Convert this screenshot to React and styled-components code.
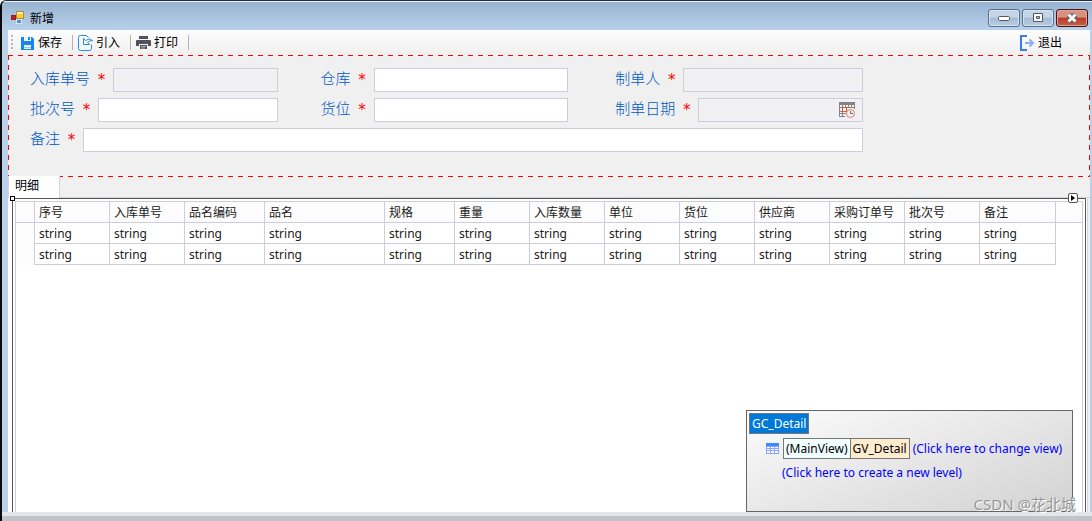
import React from 'react';
import styled, { createGlobalStyle } from 'styled-components';

const GlobalStyle = createGlobalStyle`
    * {
        box-sizing: border-box;
    }
    body {
        margin: 0;
        font-family: "Noto Sans", "Noto Sans CJK SC", sans-serif;
        font-size: 12px;
        color: #000;
    }
    button, input {
        font-family: inherit;
        font-size: inherit;
        color: inherit;
    }
`;

//Styled Components
const Window = styled.div`
    height: 100vh;
    display: flex;
    flex-direction: column;
    overflow: hidden;
    background-color: #b9d1ea;
    border-left: 2px solid #0a0a0a;
    border-top: 1px solid #26303a;
    border-top-left-radius: 6px;
`;

const TitleBar = styled.header`
    height: 29px;
    flex: none;
    display: flex;
    align-items: center;
    gap: 5px;
    padding: 4px 4px 0 9px;
    background: linear-gradient(#98b4d2, #b9d1ea);
    border-top: 1px solid #eaf1f8;
`;

const Title = styled.h1`
    flex: 1;
    margin: 0;
    font-size: 12px;
    font-weight: normal;
`;

const WindowButtons = styled.div`
    display: flex;
    gap: 2px;
`;

const WindowButton = styled.button`
    width: 32px;
    height: 18px;
    display: flex;
    justify-content: center;
    align-items: center;
    padding: 0;
    border: 1px solid ${props => (props.$close ? '#4b1014' : '#5b6f8c')};
    border-radius: 3px;
    box-shadow: inset 0 0 0 1px ${props => (props.$close ? '#dba49c' : '#d5e2f0')};
    background: ${props => (props.$close
        ? 'linear-gradient(#d89080 45%, #b83a26 50%, #c8604a)'
        : 'linear-gradient(#c4d5e8 45%, #a4bbd5 50%, #b7cde4)')};
`;

const Frame = styled.main`
    flex: 1;
    min-height: 0;
    display: flex;
    flex-direction: column;
    margin: 0 2px 0 6px;
    background-color: #f0f0f0;
`;

const ToolBar = styled.nav`
    height: 25px;
    flex: none;
    display: flex;
    align-items: center;
    padding: 0 28px 0 3px;
    background: linear-gradient(#fdfdfd, #f0f0f0);
`;

const Grip = styled.span`
    width: 2px;
    height: 15px;
    margin-right: 8px;
    background: repeating-linear-gradient(#b8b8b8 0 2px, transparent 2px 4px);
`;

const ToolButton = styled.button`
    display: flex;
    align-items: center;
    gap: 3px;
    padding: 0;
    border: none;
    background: none;
    line-height: 16px;
`;

const Divider = styled.span`
    width: 1px;
    height: 15px;
    margin: 0 5px 0 10px;
    background-color: #b4b4b4;
`;

const Spacer = styled.span`
    flex: 1;
`;

const dash = 'red 0 5px, transparent 5px 10px';

const FormPanel = styled.form`
    flex: none;
    display: grid;
    grid-template-columns: 1fr 43px 1fr 47px 1fr;
    row-gap: 6px;
    padding: 13px 21% 25px 22px;
    background:
        repeating-linear-gradient(90deg, ${dash}) 0 0 / 100% 1px no-repeat,
        repeating-linear-gradient(90deg, ${dash}) 0 100% / 100% 1px no-repeat,
        repeating-linear-gradient(${dash}) 0 0 / 1px 100% no-repeat,
        repeating-linear-gradient(${dash}) 100% 0 / 1px 100% no-repeat,
        #f0f0f0;
`;

const Field = styled.div`
    grid-column: ${props => props.$column};
    height: 24px;
    display: flex;
    align-items: center;
`;

const FieldLabel = styled.label`
    flex: none;
    display: flex;
    padding-bottom: 2px;
    font-family: "Noto Sans CJK SC", sans-serif;
    font-size: 15px;
    font-weight: 300;
    line-height: 22px;
    color: #0058c4;
`;

const Required = styled.span`
    width: 23px;
    padding-top: 2px;
    text-align: center;
    font-family: "DejaVu Sans Mono", monospace;
    font-size: 15px;
    font-weight: normal;
    color: red;
`;

const InputBox = styled.span`
    flex: 1;
    min-width: 0;
    height: 24px;
    display: flex;
    align-items: center;
    padding-right: ${props => (props.$icon ? '6px' : '0')};
    border: 1px solid #cdcdde;
    background-color: ${props => (props.$locked ? '#f1f1f4' : '#fff')};
`;

const TextInput = styled.input`
    flex: 1;
    min-width: 0;
    height: 100%;
    padding: 0 4px;
    border: none;
    outline: none;
    background: transparent;
`;

const IconButton = styled.button`
    display: flex;
    padding: 0;
    border: none;
    background: none;
`;

const TabStrip = styled.div`
    height: 21px;
    flex: none;
    display: flex;
    border-bottom: 1px solid #d4d4dc;
`;

const Tab = styled.button`
    width: 52px;
    height: 22px;
    margin-top: -1px;
    padding: 0 0 2px 6px;
    border: 1px solid #d4d4dc;
    border-width: 0 1px;
    background-color: #fff;
    text-align: left;
    line-height: 16px;
`;

const TabPage = styled.section`
    flex: 1;
    min-height: 0;
    display: flex;
    margin-right: 2px;
    padding: 0 1px 0 4px;
    border-right: 1px solid #d4d4dc;
    background-color: #fff;
`;

const Selection = styled.div`
    position: relative;
    flex: 1;
    min-width: 0;
    display: flex;
    padding: 2px 2px 0 2px;
    border: 1px solid #555;
    border-bottom: none;
`;

const SizeHandle = styled.span`
    position: absolute;
    left: -3px;
    top: -3px;
    width: 5px;
    height: 5px;
    border: 1px solid #000;
    background-color: #fff;
`;

const SmartTag = styled.button`
    position: absolute;
    right: 7px;
    top: -6px;
    width: 10px;
    height: 10px;
    display: flex;
    justify-content: center;
    align-items: center;
    padding: 0;
    border: 1px solid #555;
    border-radius: 2px;
    background-color: #fff;
`;

const GridArea = styled.div`
    position: relative;
    flex: 1;
    min-width: 0;
    border: 1px solid #cdcdde;
    border-bottom: none;
`;

const Table = styled.table`
    width: 100%;
    table-layout: fixed;
    border-collapse: separate;
    border-spacing: 0;
    line-height: 16px;
    color: #202020;
`;

const Column = styled.col`
    width: ${props => (props.$width ? `${props.$width}px` : 'auto')};
`;

const HeadCell = styled.th`
    height: 21px;
    padding: 1px 0 0 4px;
    border-right: 1px solid #cdcdde;
    border-bottom: 1px solid #cdcdde;
    background-color: #fcfcfc;
    font-weight: normal;
    text-align: left;
    white-space: nowrap;
    &:last-child {
        border-right: none;
    }
`;

const Cell = styled.td`
    height: 21px;
    padding: 2px 0 0 4px;
    border-right: 1px solid #cdcdde;
    border-bottom: 1px solid #cdcdde;
`;

const Indicator = styled.td`
    border-right: 1px solid #cdcdde;
    background-color: #fcfcfc;
`;

const LevelPanel = styled.aside`
    position: absolute;
    right: 9px;
    bottom: 0;
    width: 327px;
    height: 102px;
    display: flex;
    flex-direction: column;
    align-items: flex-start;
    gap: 4px;
    padding: 2px;
    border: 1px solid #666;
    background: linear-gradient(160deg, #fcfcfc, #d2d2d2);
    line-height: 19px;
    white-space: nowrap;
`;

const LevelRow = styled.div`
    display: flex;
    align-items: center;
    padding-left: ${props => props.$indent}px;
`;

const ViewTags = styled.span`
    display: flex;
    margin-left: ${props => (props.$nested ? '4px' : '0')};
`;

const ViewTag = styled.span`
    padding: 0 2px;
    border: 1px solid #777;
    background-color: ${props => props.$fill};
    color: ${props => props.$color || '#000'};
    & + & {
        border-left: none;
    }
`;

const LevelLink = styled.a`
    margin-left: 3px;
    color: #0000ff;
    text-decoration: none;
`;

const Watermark = styled.span`
    position: absolute;
    right: -4px;
    bottom: -3px;
    font-size: 15px;
    line-height: 20px;
    color: #969696;
    text-shadow: 1px 1px 0 #fff;
    white-space: nowrap;
`;

const StatusBar = styled.footer`
    height: 9px;
    flex: none;
    border-top: 4px solid #e5e5ea;
    background-color: #c2c2c9;
`;
//end Styled Components

const FormIcon = () => (
    <svg width="14" height="14" viewBox="0 0 14 14">
        <rect x="5.5" y="0.5" width="7" height="7" fill="#ffcc33" stroke="#b08a3a" />
        <path d="M6 1H12V3H6Z" fill="#fff0a8" />
        <rect x="0.5" y="4.5" width="4" height="4" fill="#c8201c" stroke="#8a2424" />
        <rect x="5.5" y="8.5" width="5" height="4" fill="#4d8df0" stroke="#dce8f8" />
    </svg>
);

const SaveIcon = () => (
    <svg width="14" height="14" viewBox="0 0 14 14">
        <path d="M0 1H11L13 3V14H0Z" fill="#1686ee" />
        <path d="M3 1H10V5H3Z" fill="#f4f6f8" />
        <path d="M7 1H9V4H7Z" fill="#1686ee" />
        <path d="M3 9H10V13H3Z" fill="#e6eef6" />
        <path d="M3 11H10V12H3Z" fill="#9cc8f2" />
    </svg>
);

const ImportIcon = () => (
    <svg width="15" height="16" viewBox="0 0 15 16" fill="none" stroke="#2a8be8">
        <path d="M10.5 2.5L8.5 0.5H2.5Q0.5 0.5 0.5 2.5V13.5Q0.5 15.5 2.5 15.5H11.5Q13.5 15.5 13.5 13.5V9.5" />
        <path d="M5.5 3.5V9.5H11.5L9.500 7.500Q11.500 5.500 14.500 5.500Q11.500 2.500 7.500 5.500Z" />
    </svg>
);

const PrintIcon = () => (
    <svg width="15" height="14" viewBox="0 0 15 14" fill="#51515b">
        <path d="M3 0H12V3H3ZM1 4H14Q15 4 15 5V10H12V8H3V10H0V5Q0 4 1 4ZM4 9H11V13H4Z" />
        <path d="M5 10.500H10M5 12H9" stroke="#aaa" />
    </svg>
);

const ExitIcon = () => (
    <svg width="15" height="16" viewBox="0 0 15 16" fill="none">
        <path d="M7 1H1V15H7" stroke="#3c78f0" strokeWidth="2" />
        <path d="M5 8H13M9.500 4.500L13 8L9.500 11.500" stroke="#8cacf6" strokeWidth="2" />
    </svg>
);

const CalendarIcon = () => (
    <svg width="17" height="17" viewBox="0 0 17 17" fill="none">
        <path d="M0 0H16V3H0Z" fill="#858585" />
        <path d="M0.500 3V15M3.500 3V5M6.500 3V5M9.500 3V6M12.500 3V6M15.500 3V7M0 5.500H16M0 9.500H3M0 11.500H7M0 14.500H6M3.500 10V15" stroke="#858585" />
        <rect x="3.500" y="5.500" width="4" height="4" fill="#fff" stroke="#d5583c" />
        <circle cx="11.500" cy="11.500" r="4" fill="#f4f1f1" stroke="#da846f" />
        <path d="M11.500 9V11.500H14" stroke="#666" />
    </svg>
);

const ViewIcon = () => (
    <svg width="13" height="11" viewBox="0 0 13 11">
        <path d="M0 0H13V11H0Z" fill="#8da5f8" />
        <path d="M0 0H13V3H0Z" fill="#3b8bff" />
        <path d="M1 4H4V5H1ZM5 4H8V5H5ZM9 4H12V5H9ZM1 6H4V7H1ZM5 6H8V7H5ZM9 6H12V7H9ZM1 8H4V10H1ZM5 8H8V10H5ZM9 8H12V10H9Z" fill="#fff" />
    </svg>
);

const columns = [
    { name: '序号', width: 75 },
    { name: '入库单号', width: 75 },
    { name: '品名编码', width: 80 },
    { name: '品名', width: 120 },
    { name: '规格', width: 70 },
    { name: '重量', width: 75 },
    { name: '入库数量', width: 75 },
    { name: '单位', width: 75 },
    { name: '货位', width: 75 },
    { name: '供应商', width: 75 },
    { name: '采购订单号', width: 75 },
    { name: '批次号', width: 75 },
    { name: '备注', width: 76 },
];

const fields = [
    { id: 'orderNo', label: '入库单号', column: '1', locked: true },
    { id: 'warehouse', label: '仓库', column: '3' },
    { id: 'creator', label: '制单人', column: '5', locked: true },
    { id: 'batchNo', label: '批次号', column: '1' },
    { id: 'location', label: '货位', column: '3' },
    { id: 'createDate', label: '制单日期', column: '5', locked: true, icon: true },
    { id: 'remark', label: '备注', column: '1 / -1' },
];

const FormField = ({ field }) => (
    <Field $column={field.column}>
        <FieldLabel htmlFor={field.id}>
            {field.label}
            <Required>*</Required>
        </FieldLabel>
        <InputBox $locked={field.locked} $icon={field.icon}>
            <TextInput id={field.id} type="text" readOnly={field.locked} />
            {field.icon && (
                <IconButton type="button" aria-label="选择日期">
                    <CalendarIcon />
                </IconButton>
            )}
        </InputBox>
    </Field>
);

const App = () => {
    return (
        <Window>
            <GlobalStyle />
            <TitleBar>
                <FormIcon />
                <Title>新增</Title>
                <WindowButtons>
                    <WindowButton aria-label="最小化">
                        <svg width="12" height="6"><rect x="0.5" y="1.5" width="11" height="4" rx="1" fill="#fff" stroke="#535665" /></svg>
                    </WindowButton>
                    <WindowButton aria-label="最大化">
                        <svg width="12" height="10"><path d="M1.500 0.500H10.500V8.500H1.500ZM4.500 3.500V5.500H7.500V3.500Z" fill="#fff" fillRule="evenodd" stroke="#535665" /></svg>
                    </WindowButton>
                    <WindowButton $close aria-label="关闭">
                        <svg width="12" height="10">
                            <path d="M2.500 1.500L9.500 8.500M9.500 1.500L2.500 8.500" stroke="#535665" strokeWidth="5" />
                            <path d="M2.500 1.500L9.500 8.500M9.500 1.500L2.500 8.500" stroke="#fff" strokeWidth="3" />
                        </svg>
                    </WindowButton>
                </WindowButtons>
            </TitleBar>
            <Frame>
                <ToolBar>
                    <Grip />
                    <ToolButton><SaveIcon />保存</ToolButton>
                    <Divider />
                    <ToolButton><ImportIcon />引入</ToolButton>
                    <Divider />
                    <ToolButton><PrintIcon />打印</ToolButton>
                    <Divider />
                    <Spacer />
                    <ToolButton><ExitIcon />退出</ToolButton>
                </ToolBar>
                <FormPanel>
                    {fields.map(field => <FormField key={field.id} field={field} />)}
                </FormPanel>
                <TabStrip role="tablist">
                    <Tab role="tab" aria-selected="true">明细</Tab>
                </TabStrip>
                <TabPage>
                    <Selection>
                        <SizeHandle />
                        <GridArea>
                            <Table>
                                <colgroup>
                                    <Column $width={19} />
                                    {columns.map(column => <Column key={column.name} $width={column.width} />)}
                                    <Column />
                                </colgroup>
                                <thead>
                                    <tr>
                                        <HeadCell />
                                        {columns.map(column => <HeadCell key={column.name}>{column.name}</HeadCell>)}
                                        <HeadCell />
                                    </tr>
                                </thead>
                                <tbody>
                                    {[0, 1].map(row => (
                                        <tr key={row}>
                                            <Indicator />
                                            {columns.map(column => <Cell key={column.name}>string</Cell>)}
                                            <td />
                                        </tr>
                                    ))}
                                </tbody>
                            </Table>
                            <LevelPanel>
                                <LevelRow $indent={0}>
                                    <ViewTags>
                                        <ViewTag $fill="#0078d7" $color="#fff">GC_Detail</ViewTag>
                                    </ViewTags>
                                </LevelRow>
                                <LevelRow $indent={17}>
                                    <ViewIcon />
                                    <ViewTags $nested>
                                        <ViewTag $fill="#f0ffff">(MainView)</ViewTag>
                                        <ViewTag $fill="#ffebcd">GV_Detail</ViewTag>
                                    </ViewTags>
                                    <LevelLink href="#view">(Click here to change view)</LevelLink>
                                </LevelRow>
                                <LevelRow $indent={30}>
                                    <LevelLink href="#level">(Click here to create a new level)</LevelLink>
                                </LevelRow>
                                <Watermark>CSDN @花北城</Watermark>
                            </LevelPanel>
                        </GridArea>
                        <SmartTag aria-label="任务">
                            <svg width="4" height="6"><path d="M0 0L4 3L0 6Z" /></svg>
                        </SmartTag>
                    </Selection>
                </TabPage>
            </Frame>
            <StatusBar />
        </Window>
    );
}

export default App;
